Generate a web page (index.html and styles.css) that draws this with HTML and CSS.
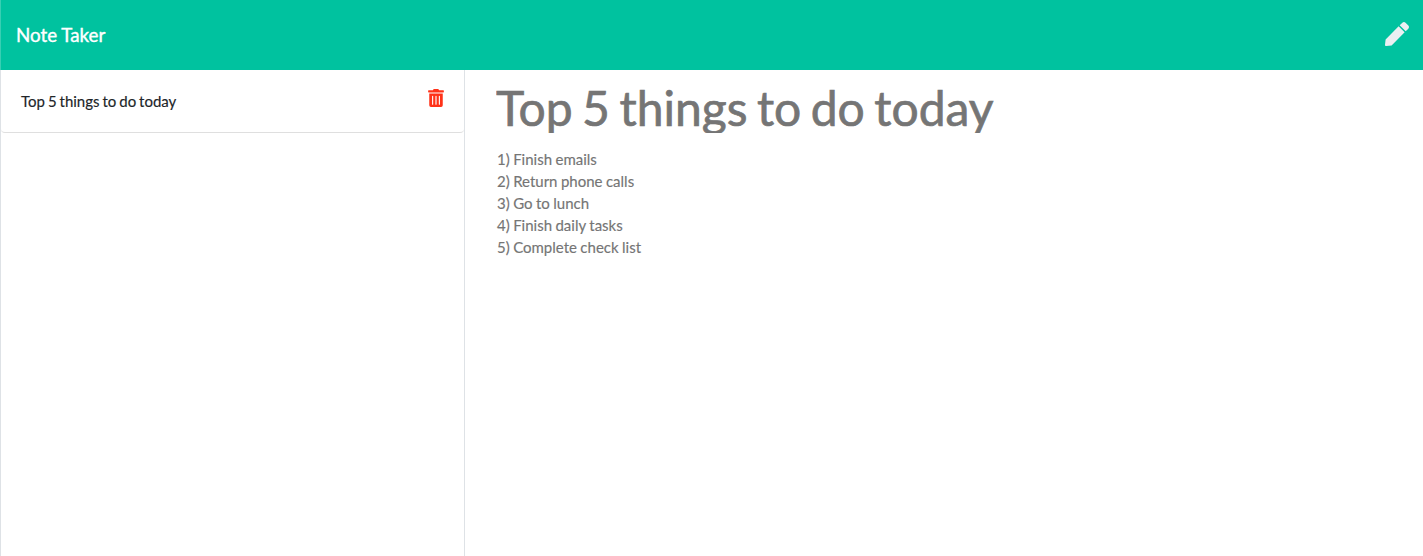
FILE: index.html
```html
<!DOCTYPE html>
<html lang="en">
<head>
<meta charset="utf-8">
<title>Note Taker</title>
<link rel="stylesheet" href="styles.css">
</head>
<body>
<nav class="navbar">
  <a class="brand">Note Taker</a>
  <svg class="pen" viewBox="0 0 512 512"><path d="M290.74 93.24l128.02 128.02-277.99 277.99-114.14 12.6C11.35 513.54-1.56 500.62.14 485.34l12.7-114.22 277.9-277.88zm207.2-19.06l-60.11-60.11c-18.75-18.75-49.16-18.75-67.91 0l-56.55 56.55 128.02 128.02 56.55-56.55c18.75-18.76 18.75-49.16 0-67.91z"/></svg>
</nav>
<main class="layout">
  <aside class="list">
    <div class="item">
      <span class="name">Top 5 things to do today</span>
      <svg class="trash" viewBox="0 0 448 512"><path d="M32 464a48 48 0 0 0 48 48h288a48 48 0 0 0 48-48V128H32zm272-256a16 16 0 0 1 32 0v224a16 16 0 0 1-32 0zm-96 0a16 16 0 0 1 32 0v224a16 16 0 0 1-32 0zm-96 0a16 16 0 0 1 32 0v224a16 16 0 0 1-32 0zM432 32H312l-9.400-18.700A24 24 0 0 0 281.100 0H166.800a23.720 23.720 0 0 0-21.400 13.300L136 32H16A16 16 0 0 0 0 48v32a16 16 0 0 0 16 16h416a16 16 0 0 0 16-16V48a16 16 0 0 0-16-16z"/></svg>
    </div>
  </aside>
  <section class="note">
    <h1 class="title">Top 5 things to do today</h1>
    <div class="text">1) Finish emails
2) Return phone calls
3) Go to lunch
4) Finish daily tasks
5) Complete check list</div>
  </section>
</main>
</body>
</html>
```
FILE: styles.css
```css
* { box-sizing: border-box; }
body { margin: 0; height: 100vh; display: flex; flex-direction: column; overflow: hidden; background: #fff; color: #212529; font: 15px/22px Lato, sans-serif; -webkit-text-stroke: 0.15px currentColor; }
.navbar { height: 70px; flex: none; padding: 0 14px 0 15px; display: flex; align-items: center; justify-content: space-between; background: #00c29f; border-left: 1px solid #38cfb3; color: #fff; }
.brand { font-size: 18.75px; line-height: 28px; -webkit-text-stroke-width: 0.4px; }
.pen { width: 24px; height: 24px; fill: #ebeff2; margin-bottom: 2px; }
.layout { flex: 1; display: flex; }
.list { width: 465px; border: solid #dee2e6; border-width: 0 1px; }
.item { height: 63px; padding: 0 20px; display: flex; align-items: center; justify-content: space-between; border-bottom: 1px solid #dfdfdf; border-radius: 0 0 4px 4px; }
.name { word-spacing: -0.9px; }
.trash { width: 16px; height: 18px; fill: #ff3218; margin-bottom: 6px; }
.note { flex: 1; padding: 9px 31px; color: #757575; }
.title { margin: 0; height: 54px; overflow: hidden; font-size: 48px; font-weight: 400; line-height: 58px; white-space: nowrap; word-spacing: -2.8px; -webkit-text-stroke-width: 0.7px; }
.text { margin-top: 15px; padding-left: 1px; white-space: pre-line; word-spacing: -0.4px; }
```
